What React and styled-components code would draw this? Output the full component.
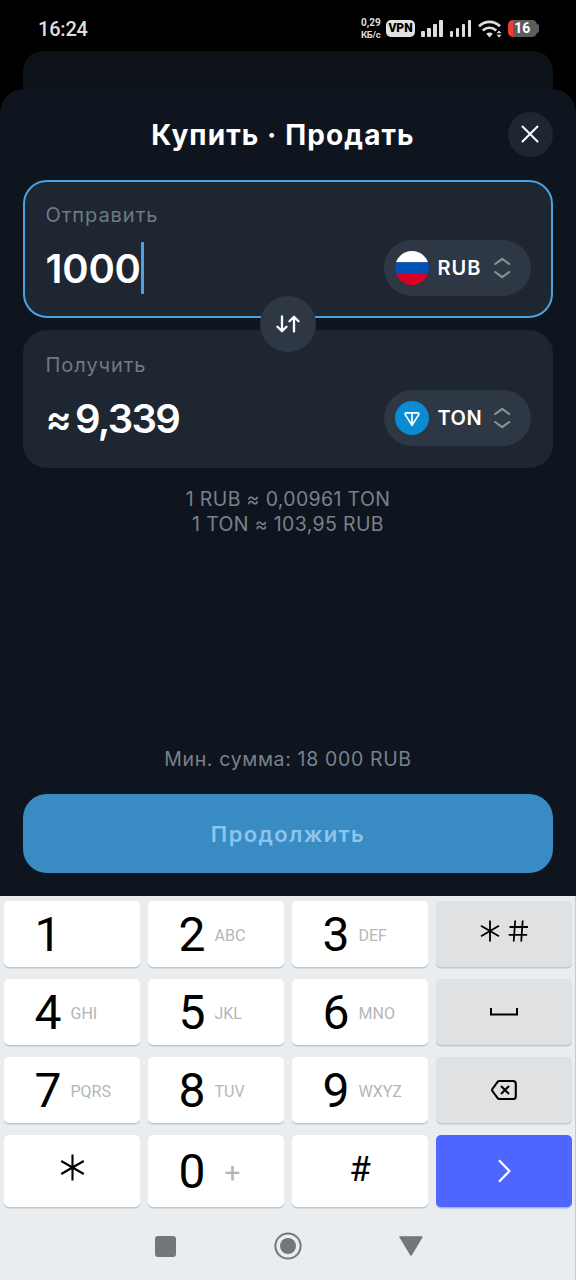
// Import necessary modules
import React, { useState } from 'react';
import styled, { createGlobalStyle } from 'styled-components';

const GlobalStyle = createGlobalStyle`
  * {
    box-sizing: border-box;
  }
  body {
    margin: 0;
    background: #000000;
    font-family: Inter, 'Open Sans', sans-serif;
  }
  svg {
    display: block;
    flex-shrink: 0;
  }
  button {
    border: none;
    padding: 0;
    font-family: inherit;
    cursor: pointer;
  }
`;

// Keypad data
const keyRows = [
    [
        { digit: '1', letters: '' },
        { digit: '2', letters: 'ABC' },
        { digit: '3', letters: 'DEF' },
        { icon: 'symbols', tone: 'grey', lift: 6 },
    ],
    [
        { digit: '4', letters: 'GHI' },
        { digit: '5', letters: 'JKL' },
        { digit: '6', letters: 'MNO' },
        { icon: 'space', tone: 'grey' },
    ],
    [
        { digit: '7', letters: 'PQRS' },
        { digit: '8', letters: 'TUV' },
        { digit: '9', letters: 'WXYZ' },
        { icon: 'backspace', tone: 'grey' },
    ],
    [
        { icon: 'asterisk', lift: 7 },
        { digit: '0', letters: '+' },
        { hash: true, lift: 3 },
        { icon: 'next', tone: 'blue' },
    ],
];

const keyColors = {
    white: '#ffffff',
    grey: '#dfe1e3',
    blue: '#4e66ff',
};

const Screen = styled.div`
  width: 576px;
  height: 1280px;
  display: flex;
  flex-direction: column;
  overflow: hidden;
  background: #000000;
`;

// Status bar
const StatusBar = styled.div`
  height: 51px;
  flex-shrink: 0;
  display: flex;
  align-items: center;
  justify-content: space-between;
  padding: 6px 37px 0 38px;
  font-family: Roboto, sans-serif;
  color: #dedede;
`;

const Time = styled.div`
  font-size: 20px;
  font-weight: 500;
  line-height: 24px;
  letter-spacing: -0.2px;
`;

const StatusIcons = styled.div`
  display: flex;
  align-items: center;
`;

const Speed = styled.div`
  width: 25px;
  font-size: 10px;
  font-weight: 700;
  line-height: 11.5px;
  white-space: nowrap;
`;

const SpeedUnit = styled.div`
  font-size: 9.5px;
  letter-spacing: -0.3px;
`;

const VpnBadge = styled.div`
  width: 29px;
  height: 17px;
  margin-right: 6px;
  border-radius: 5px;
  background: #e2e2e2;
  color: #000000;
  font-size: 12px;
  font-weight: 900;
  line-height: 17px;
  text-align: center;
`;

const Bars = styled.div`
  width: 22px;
  height: 17px;
  margin-right: 6.5px;
  display: flex;
  align-items: flex-end;
  justify-content: space-between;
`;

const Bar = styled.div`
  width: 3.5px;
  height: ${props => props.$height}px;
  border-radius: 1px;
  background: #dedede;
`;

const Battery = styled.div`
  width: 29.5px;
  height: 17px;
  margin-left: 5.5px;
  border-radius: 5px;
  background: linear-gradient(90deg, #f23b36 5px, #5d5d5d 5px);
  color: #ffffff;
  font-size: 14px;
  font-weight: 700;
  line-height: 17px;
  text-align: center;
`;

const BatteryTip = styled.div`
  width: 2px;
  height: 9px;
  border-radius: 0 2px 2px 0;
  background: #5d5d5d;
`;

// Sheets
const BackSheet = styled.div`
  height: 62px;
  margin: 0 23px -24px;
  flex-shrink: 0;
  border-radius: 20px 20px 0 0;
  background: #0c1217;
`;

const Sheet = styled.div`
  height: 807px;
  flex-shrink: 0;
  display: flex;
  flex-direction: column;
  padding: 0 23px 23px;
  border-radius: 24px 24px 0 0;
  background: #0f151f;
`;

const Header = styled.div`
  height: 91px;
  flex-shrink: 0;
  display: flex;
  align-items: center;
  justify-content: space-between;
  padding-bottom: 1px;
`;

const HeaderSide = styled.div`
  width: 35px;
`;

const Title = styled.h1`
  margin: 0;
  padding-top: 2px;
  font-size: 28px;
  font-weight: 700;
  line-height: 34px;
  letter-spacing: 1.1px;
  color: #ffffff;
  white-space: nowrap;
`;

const CloseButton = styled.button`
  width: 45px;
  height: 45px;
  display: flex;
  align-items: center;
  justify-content: center;
  border-radius: 50%;
  background: #1e2632;
`;

const Cards = styled.div`
  position: relative;
  display: flex;
  flex-direction: column;
  gap: 12px;
`;

const Card = styled.div`
  height: 138px;
  display: flex;
  align-items: flex-end;
  justify-content: space-between;
  padding: 21px 20.5px 20.5px;
  border: 2px solid ${props => (props.$active ? '#4aa2e3' : '#1e2632')};
  border-radius: 24px;
  background: #1e2632;
`;

const Field = styled.div`
  height: 93px;
  display: flex;
  flex-direction: column;
  justify-content: space-between;
`;

const Label = styled.div`
  font-size: 20px;
  line-height: 24px;
  letter-spacing: 0.95px;
  color: #707985;
`;

const Amount = styled.div`
  height: 56px;
  display: flex;
  align-items: center;
  font-size: 40px;
  font-weight: 600;
  line-height: 50px;
  letter-spacing: ${props => props.$spacing}px;
  color: #ffffff;
`;

const Digits = styled.span`
  padding-top: 2px;
`;

const Approx = styled.span`
  width: 29.5px;
  padding-top: 3px;
  font-size: 39px;
`;

const Caret = styled.span`
  width: 3px;
  height: 52px;
  border-radius: 1px;
  background: #4aa2e3;
`;

const CurrencyPill = styled.button`
  width: 147px;
  height: 56px;
  display: flex;
  align-items: center;
  padding: 0 20px 0 11px;
  border-radius: 28px;
  background: #2e3744;
`;

const CurrencyName = styled.span`
  flex: 1;
  padding-left: 9px;
  font-size: 20px;
  font-weight: 600;
  letter-spacing: ${props => props.$spacing}px;
  text-align: left;
  color: #ffffff;
`;

const SwapButton = styled.button`
  position: absolute;
  left: 50%;
  top: 50%;
  width: 56px;
  height: 56px;
  transform: translate(-50%, -50%);
  display: flex;
  align-items: center;
  justify-content: center;
  border-radius: 50%;
  background: #2e3744;
`;

const Rates = styled.div`
  flex: 1;
  padding-top: 18.5px;
  font-size: 19.5px;
  line-height: 25.5px;
  letter-spacing: 0.35px;
  text-align: center;
  color: #7a818c;
`;

const MinAmount = styled.div`
  margin-bottom: 23px;
  font-size: 19.5px;
  line-height: 24px;
  letter-spacing: 0.65px;
  text-align: center;
  color: #7a818c;
`;

const ContinueButton = styled.button`
  height: 79px;
  flex-shrink: 0;
  border-radius: 24px;
  background: #398bc4;
  color: #8cc4ec;
  font-size: 22px;
  font-weight: 600;
  letter-spacing: 1.4px;
`;

// Keyboard
const Keyboard = styled.div`
  height: 384px;
  flex-shrink: 0;
  display: flex;
  flex-direction: column;
  border-right: 1px solid #c5cad1;
  background: #e9edf0;
  font-family: Roboto, sans-serif;
`;

const Keys = styled.div`
  display: grid;
  grid-template-columns: repeat(4, 136px);
  grid-template-rows: 66px 66px 66px 72px;
  gap: 12px 8px;
  padding: 5px 0 0 4px;
`;

const Key = styled.button`
  display: flex;
  align-items: center;
  justify-content: ${props => (props.$centered ? 'center' : 'flex-start')};
  padding-left: ${props => (props.$centered ? 0 : 30.5)}px;
  padding-bottom: ${props => props.$lift || 0}px;
  border-radius: 5px;
  background: ${props => keyColors[props.$tone]};
  box-shadow: 0 1.5px 0 ${props => (props.$tone === 'blue' ? '#a5b0f0' : '#c3c7ca')};
  color: #000000;
`;

const Digit = styled.span`
  width: 36px;
  padding-top: 2px;
  font-size: 48px;
  line-height: 56px;
  text-align: left;
`;

const Letters = styled.span`
  font-size: ${props => (props.$plus ? 28 : 16)}px;
  padding: 4px 0 0 ${props => (props.$plus ? 10 : 0)}px;
  line-height: 20px;
  color: #b4b6b7;
`;

const Hash = styled.span`
  font-size: 35px;
  line-height: 40px;
`;

const NavBar = styled.div`
  flex: 1;
  display: flex;
  align-items: center;
  justify-content: center;
  gap: 97.5px;
  padding: 5px 0 0 3px;
`;

const CloseIcon = () => (
    <svg width="18" height="18" viewBox="0 0 18 18" fill="none" stroke="#ffffff" strokeWidth="2" strokeLinecap="round">
        <path d="M1.5 1.5 16.5 16.5M16.5 1.5 1.5 16.5" />
    </svg>
);

const SwapIcon = () => (
    <svg width="24" height="18" viewBox="0 0 24 18" fill="none" stroke="#ffffff" strokeWidth="2.3" strokeLinecap="round" strokeLinejoin="round">
        <path d="M6 1.5V16M1.5 11.8 6 16.2l4.5-4.4" />
        <path d="M18 16.5V2M13.5 6.2 18 1.8l4.5 4.4" />
    </svg>
);

const SelectIcon = () => (
    <svg width="17" height="22" viewBox="0 0 17 22" fill="none" stroke="#8b929c" strokeWidth="2.1" strokeLinecap="round" strokeLinejoin="round">
        <path d="M1.2 7 8.2 1.8l7 5.2M1.2 15l7 5.2 7-5.2" />
    </svg>
);

const FlagIcon = () => (
    <svg width="34" height="34" viewBox="0 0 34 34">
        <clipPath id="flag">
            <circle cx="17" cy="17" r="17" />
        </clipPath>
        <g clipPath="url(#flag)">
            <rect width="34" height="11.3" fill="#ffffff" />
            <rect y="11.3" width="34" height="11.4" fill="#0052b4" />
            <rect y="22.7" width="34" height="11.3" fill="#d80027" />
        </g>
    </svg>
);

const TonIcon = () => (
    <svg width="34" height="34" viewBox="0 0 34 34" fill="none">
        <circle cx="17" cy="17" r="17" fill="#0a8bd4" />
        <path d="M11.3 11.8h11.4c1 0 1.5 1 1 1.8L17 24.4 10.3 13.6c-.5-.8 0-1.8 1-1.8ZM17 12v12" stroke="#ffffff" strokeWidth="1.7" strokeLinejoin="round" />
    </svg>
);

const WifiIcon = () => (
    <svg width="24" height="18" viewBox="0 0 24 18" fill="none" stroke="#dedede" strokeWidth="2.7">
        <path d="M1 6.3C7 .4 16 .4 22 6.3M4.8 10.6c4-3.8 9.4-3.8 13.4 0" />
        <path d="M8.2 13.8q3.3-2.6 6.6 0L11.5 17.4Z" fill="#dedede" stroke="none" />
        <path d="M18.5 13.2 21 10.4l2.5 2.8ZM18.5 14.8l2.5 2.8 2.5-2.8Z" fill="#dedede" stroke="none" />
    </svg>
);

const AsteriskIcon = ({ size, stroke }) => (
    <svg width={size} height={size} viewBox="0 0 28 28" fill="none" stroke="#000000" strokeWidth={stroke}>
        <path d="M14 .5v27M2.3 7.3l23.4 13.4M25.7 7.3 2.3 20.7" />
    </svg>
);

const SymbolsIcon = () => (
    <svg width="48" height="22" viewBox="0 0 48 22" fill="none" stroke="#000000" strokeWidth="1.8">
        <path d="M10 .5v21M1 5.7l18 10.6M19 5.7 1 16.3" />
        <path d="M35.2.5 33.7 21.5M42.7.5 41.2 21.5M29.5 7H48M28.7 14.8h18.5" />
    </svg>
);

const SpaceIcon = () => (
    <svg width="28" height="8" viewBox="0 0 28 8" fill="none" stroke="#000000" strokeWidth="2">
        <path d="M1 0v6.5h26V0" />
    </svg>
);

const BackspaceIcon = () => (
    <svg width="26" height="20" viewBox="0 0 26 20" fill="none" stroke="#000000" strokeWidth="2.1" strokeLinejoin="round">
        <path d="M8.2 1H22a2.8 2.8 0 0 1 2.8 2.8v12.4A2.8 2.8 0 0 1 22 19H8.2q-1 0-1.6-.8L1.4 11q-.7-1 0-2L6.6 1.8Q7.2 1 8.2 1Z" />
        <path d="m10 6 8 8M18 6l-8 8" />
    </svg>
);

const NextIcon = () => (
    <svg width="13" height="24" viewBox="0 0 13 24" fill="none" stroke="#ffffff" strokeWidth="2.2">
        <path d="M1 1.2 11.4 12 1 22.8" />
    </svg>
);

const keyIcons = {
    symbols: <SymbolsIcon />,
    space: <SpaceIcon />,
    backspace: <BackspaceIcon />,
    asterisk: <AsteriskIcon size={27} stroke={2.2} />,
    next: <NextIcon />,
};

const Signal = () => (
    <Bars>
        {[6, 9, 13, 17].map((height) => (
            <Bar key={height} $height={height} />
        ))}
    </Bars>
);

const KeyButton = ({ item }) => {
    if (item.digit) {
        return (
            <Key $tone="white">
                <Digit>{item.digit}</Digit>
                <Letters $plus={item.letters === '+'}>{item.letters}</Letters>
            </Key>
        );
    }
    return (
        <Key $tone={item.tone || 'white'} $lift={item.lift} $centered>
            {item.hash ? <Hash>#</Hash> : keyIcons[item.icon]}
        </Key>
    );
};

const App = () => {
    const [amount] = useState('1000');

    return (
        <Screen>
            <GlobalStyle />
            <StatusBar>
                <Time>16:24</Time>
                <StatusIcons>
                    <Speed>
                        0,29
                        <SpeedUnit>КБ/с</SpeedUnit>
                    </Speed>
                    <VpnBadge>VPN</VpnBadge>
                    <Signal />
                    <Signal />
                    <WifiIcon />
                    <Battery>16</Battery>
                    <BatteryTip />
                </StatusIcons>
            </StatusBar>
            <BackSheet />
            <Sheet>
                <Header>
                    <HeaderSide />
                    <Title>Купить · Продать</Title>
                    <CloseButton>
                        <CloseIcon />
                    </CloseButton>
                </Header>
                <Cards>
                    <Card $active>
                        <Field>
                            <Label>Отправить</Label>
                            <Amount $spacing={-0.2}>
                                <Digits>{amount}</Digits>
                                <Caret />
                            </Amount>
                        </Field>
                        <CurrencyPill>
                            <FlagIcon />
                            <CurrencyName $spacing={1}>RUB</CurrencyName>
                            <SelectIcon />
                        </CurrencyPill>
                    </Card>
                    <Card>
                        <Field>
                            <Label>Получить</Label>
                            <Amount $spacing={-1.7}>
                                <Approx>≈</Approx>
                                <Digits>9,339</Digits>
                            </Amount>
                        </Field>
                        <CurrencyPill>
                            <TonIcon />
                            <CurrencyName $spacing={0.5}>TON</CurrencyName>
                            <SelectIcon />
                        </CurrencyPill>
                    </Card>
                    <SwapButton>
                        <SwapIcon />
                    </SwapButton>
                </Cards>
                <Rates>
                    <div>1 RUB ≈ 0,00961 TON</div>
                    <div>1 TON ≈ 103,95 RUB</div>
                </Rates>
                <MinAmount>Мин. сумма: 18 000 RUB</MinAmount>
                <ContinueButton>Продолжить</ContinueButton>
            </Sheet>
            <Keyboard>
                <Keys>
                    {keyRows.flat().map((item, index) => (
                        <KeyButton key={index} item={item} />
                    ))}
                </Keys>
                <NavBar>
                    <svg width="21" height="21" viewBox="0 0 21 21">
                        <rect width="21" height="21" rx="3" fill="#747777" />
                    </svg>
                    <svg width="28" height="28" viewBox="0 0 28 28">
                        <circle cx="14" cy="14" r="12.6" fill="none" stroke="#747777" strokeWidth="2" />
                        <circle cx="14" cy="14" r="8" fill="#747777" />
                    </svg>
                    <svg width="24" height="20" viewBox="0 0 24 20">
                        <path d="M1.2 1h21.6L12 19Z" fill="#747777" stroke="#747777" strokeWidth="1.6" strokeLinejoin="round" />
                    </svg>
                </NavBar>
            </Keyboard>
        </Screen>
    );
};

export default App;
